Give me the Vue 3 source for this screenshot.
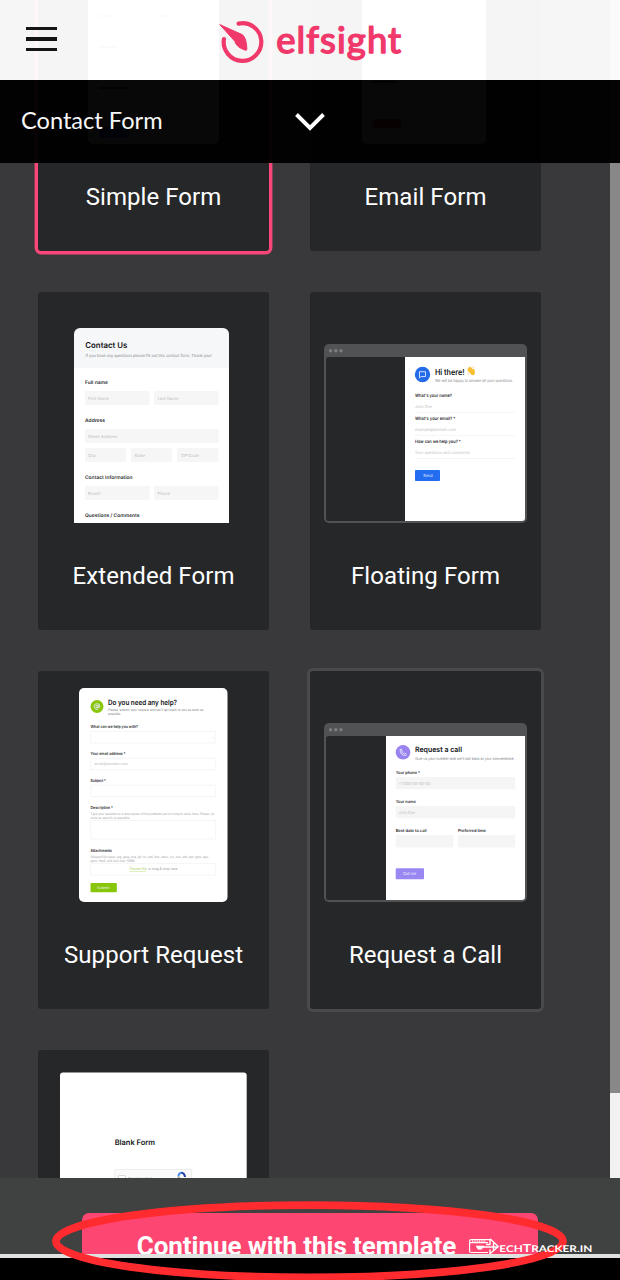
<script setup>
// Each preview is drawn in page coordinates: [x, baseline, width, size, kind, text]
const cards = [
  {
    name: 'Simple Form', x: 38, y: -87, state: 'selected', labelWidth: 135.5,
    rects: [[88, -50, 131, 194, 5, '#fff'], [99, 15, 12, 2, 0, '#999'], [156, 15, 12, 2, 0, '#999'], [99, 46, 18, 2, 0, '#999'], [99, 87, 27, 2, 0, '#444'], [99, 95, 103, 13, 0, '#f3f3f3'], [99, 127, 30, 11, 1, '#226bea']],
    texts: [],
  },
  {
    name: 'Email Form', x: 310, y: -87, state: '', labelWidth: 122,
    rects: [[362, -50, 124, 194, 5, '#fff'], [373, 81, 22, 2, 0, '#555'], [373, 119, 28, 9, 1, '#e03422']],
    texts: [],
  },
  {
    name: 'Extended Form', x: 38, y: 292, state: '', labelWidth: 162,
    rects: [
      [74, 328, 155, 50, 6, '#f6f7f8'], [74, 368, 155, 155, 0, '#fff'],
      [85, 391, 64.5, 14, 1, '#f6f6f7'], [154, 391, 64.5, 14, 1, '#f6f6f7'],
      [85, 429, 133.5, 14, 1, '#f6f6f7'],
      [85, 448, 41, 14, 1, '#f6f6f7'], [131, 448, 41, 14, 1, '#f6f6f7'], [177, 448, 41.5, 14, 1, '#f6f6f7'],
      [85, 486, 64.5, 14, 1, '#f6f6f7'], [154, 486, 64.5, 14, 1, '#f6f6f7'],
    ],
    texts: [
      [85.3, 348, 42, 8, 'title', 'Contact Us'],
      [85.5, 356.8, 126, 4.2, 'sub', 'If you have any questions please fill out this contact form. Thank you!'],
      [85, 384, 23, 4.8, 'label', 'Full name'], [88, 399.7, 21, 4, 'hint', 'First Name'], [157.5, 399.7, 21, 4, 'hint', 'Last Name'],
      [85, 422, 20, 4.8, 'label', 'Address'], [88, 437.7, 29.5, 4, 'hint', 'Street Address'],
      [88, 457, 8, 4, 'hint', 'City'], [134.5, 457, 10.5, 4, 'hint', 'State'], [181, 457, 18, 4, 'hint', 'ZIP Code'],
      [85, 479, 47.5, 4.8, 'label', 'Contact Information'], [88, 494.7, 13, 4, 'hint', 'Email*'], [157.5, 494.7, 12.5, 4, 'hint', 'Phone'],
      [85, 517, 54.5, 4.8, 'label', 'Questions / Comments'],
    ],
  },
  {
    name: 'Floating Form', x: 310, y: 292, state: '', labelWidth: 149, window: { y: 344, split: 405 },
    rects: [[415, 412, 100, 0.8, 0, '#f3f3f3'], [415, 435, 100, 0.8, 0, '#f3f3f3'], [415, 458, 100, 0.8, 0, '#f3f3f3'], [415, 470, 25, 11, 0.8, '#226df0']],
    badge: { x: 422.5, y: 374.5, r: 7.7, color: '#236be8', icon: 'chat' },
    texts: [
      [435, 375, 29.5, 8.4, 'title', 'Hi there!'],
      [435, 382.3, 78, 4, 'sub', 'We will be happy to answer all your questions.'],
      [415, 397, 37, 4.4, 'label', "What's your name?"], [415, 408, 17, 4, 'hint', 'John Doe'],
      [415, 420, 40.5, 4.4, 'label', "What's your email? *"], [415, 431, 41, 4, 'hint', 'example@domain.com'],
      [415, 443, 46, 4.4, 'label', 'How can we help you? *'], [415, 453.6, 55, 4, 'hint', 'Your questions and comments'],
      [423.2, 477.2, 9.3, 4, 'button', 'Send'],
    ],
  },
  {
    name: 'Support Request', x: 38, y: 671, state: '', labelWidth: 179,
    rects: [
      [79, 688, 148.5, 214, 5, '#fff'],
      [90.7, 731.5, 125, 11.5, 0.5, 'box'], [90.7, 758.3, 125, 11.5, 0.5, 'box'], [90.7, 785.2, 125, 11.5, 0.5, 'box'],
      [90.7, 820.5, 125, 18.5, 0.5, 'box'], [90.7, 863.6, 125, 11.5, 0.5, 'box'], [90.5, 883, 26.3, 9.3, 0.8, '#87c609'],
    ],
    badge: { x: 97, y: 706.5, r: 6.5, color: '#8bc60c', icon: 'at' },
    texts: [
      [108, 705, 69, 7.3, 'title', 'Do you need any help?'],
      [108, 711.3, 95.5, 3.5, 'sub', "Please, submit your request and we'll get back to you as soon as"], [108, 715.3, 13, 3.5, 'sub', 'possible.'],
      [90.5, 728.3, 47.5, 4, 'label', 'What can we help you with?'], [95, 738.3, 2, 3, 'hint', '-'], [212, 738, 2, 3, 'hint', '⌄'],
      [90.5, 755.3, 35, 4, 'label', 'Your email address *'], [94.5, 765.3, 33.5, 3.6, 'hint', 'email@domain.com'],
      [90.5, 782, 15.5, 4, 'label', 'Subject *'],
      [90.5, 809, 22.5, 4, 'label', 'Description *'],
      [90.5, 815.3, 124, 3.4, 'fine', 'Type your question or a description of the problem you’re trying to solve here. Please, try'], [90.5, 819.4, 39.5, 3.4, 'fine', 'to be as specific as possible.'],
      [90.5, 851.7, 21.5, 4, 'label', 'Attachments'],
      [90.5, 858.2, 118.5, 3.4, 'fine', 'Allowed file types: jpg, jpeg, png, gif, txt, pdf, doc, docx, xls, xlsx, odt, ppt, pptx, pps,'], [90.5, 862.3, 44.5, 3.4, 'fine', 'ppsx, mp3, and less than 10MB.'],
      [129.5, 870.3, 16.7, 3.6, 'link', 'Choose file'], [148, 870.3, 29.5, 3.6, 'fine', 'or drag & drop here'],
      [97, 888.9, 12.5, 3.8, 'button', 'Submit'],
    ],
  },
  {
    name: 'Request a Call', x: 310, y: 671, state: 'hovered', labelWidth: 153, window: { y: 723, split: 386 },
    rects: [
      [395.7, 777, 119.5, 12.3, 0.8, '#f5f5f6'], [395.7, 806, 119.5, 12.3, 0.8, '#f5f5f6'],
      [395.7, 835, 57.5, 12.5, 0.8, '#f5f5f6'], [458, 835, 57.2, 12.5, 0.8, '#f5f5f6'], [395.7, 868.3, 28.3, 11, 0.8, '#9b87f1'],
    ],
    badge: { x: 403, y: 752.3, r: 7.3, color: '#9a83ee', icon: 'phone' },
    texts: [
      [415, 752.3, 47, 7.4, 'title', 'Request a call'],
      [415, 759.8, 99.5, 3.9, 'sub', "Give us your number and we'll call back at your convenience."],
      [395.7, 774, 24.3, 4.2, 'label', 'Your phone *'], [398.5, 784.8, 31.5, 4, 'hint', '+1 000-00-00-00'],
      [395.7, 803, 20, 4.2, 'label', 'Your name'], [398.5, 813.8, 16.5, 4, 'hint', 'John Doe'],
      [395.7, 832, 31, 4.2, 'label', 'Best date to call'], [458, 832, 28, 4.2, 'label', 'Preferred time'],
      [403, 875.3, 13.3, 4, 'button', 'Call me'],
    ],
  },
  {
    name: '', x: 38, y: 1050, state: '', labelWidth: 0,
    rects: [[60, 1072.5, 186.7, 140, 3, '#fff'], [114.7, 1169.5, 77, 20, 1, 'panel'], [118.5, 1175.5, 7, 7, 0.5, 'check']],
    captcha: true,
    texts: [[114.7, 1144.7, 40.3, 7.6, 'title', 'Blank Form'], [128, 1180, 24, 4, 'sub', "I'm not a robot"]],
  },
]

const outlined = { box: ['#fff', '#f0f0f0'], panel: ['#fafafa', '#e6e6e6'], check: ['#fff', '#c9c9c9'] }
const fillOf = (c) => (outlined[c] ? outlined[c][0] : c)
const strokeOf = (c) => (outlined[c] ? outlined[c][1] : 'none')
</script>

<template>
  <div class="page">
    <main class="gallery">
      <div class="grid">
        <article v-for="card in cards" :key="card.y + card.x" class="card" :class="card.state">
          <svg class="preview" width="231" height="258" :viewBox="`${card.x} ${card.y} 231 258`">
            <g v-if="card.window">
              <rect x="324" :y="card.window.y" width="203" height="179" rx="5" fill="#515254" />
              <rect x="326" :y="card.window.y + 13" :width="card.window.split - 320" height="164" rx="2.5" fill="#262729" />
              <rect :x="card.window.split + 20" :y="card.window.y + 13" :width="505 - card.window.split" height="164" rx="3" fill="#fff" />
              <rect :x="card.window.split" :y="card.window.y + 13" width="100" height="164" fill="#fff" />
              <rect x="480" :y="card.window.y + 13" width="45" height="20" fill="#fff" />
              <circle v-for="d in 3" :key="d" :cx="325.4 + d * 5.2" :cy="card.window.y + 6.8" r="1.7" fill="#7d7e80" />
            </g>
            <rect v-for="(r, i) in card.rects" :key="i" :x="r[0]" :y="r[1]" :width="r[2]" :height="r[3]" :rx="r[4]" :fill="fillOf(r[5])" :stroke="strokeOf(r[5])" stroke-width="0.7" />
            <g v-if="card.badge" :transform="`translate(${card.badge.x} ${card.badge.y})`">
              <circle :r="card.badge.r" :fill="card.badge.color" />
              <path v-if="card.badge.icon === 'chat'" d="M-3-2.8H3V2H-1.2L-3 3.4Z" class="glyph" />
              <g v-else-if="card.badge.icon === 'at'" class="glyph">
                <circle r="1.2" />
                <path d="M1.2-1.2V.7Q2.8 1.6 2.8-.2A2.8 2.8 0 1 0 1.3 2.5" />
              </g>
              <path v-else d="M-3-2.6L-1.7-3.3L-.6-1.2L-1.3-.4Q-.6 1 .7 1.5L1.5.7L3.4 1.9L2.6 3.2Q-2.6 3.2-3-2.6Z" class="glyph" />
            </g>
            <g v-if="card.badge && card.badge.icon === 'chat'" fill="#f9bd32">
              <path d="M467.4 370.6L472 375.3Q475.8 375.2 474.8 371L473.9 368.6L472.9 369.2L470.2 366.5L469.4 367.2L468.6 367L468.4 367.9L467.5 368.1L468 369.3Z" />
              <path d="M467 372.5L469 375M472.5 366.8L474.4 368" fill="none" stroke="#efb64c" stroke-width=".6" />
            </g>
            <g v-if="card.captcha" fill="none" stroke-width="2">
              <path d="M178.5 1176A3.6 3.6 0 0 1 182 1172.8" stroke="#4b8cf0" />
              <path d="M181.5 1172.8Q184.5 1173 185 1177" stroke="#253ea4" />
              <path d="M178.5 1176A3.5 3.5 0 0 0 184 1179" stroke="#aaa" />
            </g>
            <text v-for="(t, i) in card.texts" :key="'t' + i" :x="t[0]" :y="t[1]" :textLength="t[2]" :font-size="t[3]" :class="t[4]" lengthAdjust="spacingAndGlyphs">{{ t[5] }}</text>
          </svg>
          <svg v-if="card.name" class="name" width="231" height="52" viewBox="0 0 231 52">
            <text x="115.5" y="34.4" text-anchor="middle" :textLength="card.labelWidth">{{ card.name }}</text>
          </svg>
        </article>
      </div>
      <div class="scrollbar"><div class="thumb"></div></div>
    </main>

    <div class="top">
      <header class="header">
        <div class="burger"><i></i><i></i><i></i></div>
        <svg class="logo" width="190" height="70" viewBox="218 8 190 70">
          <path d="M238.6 23.6A18.8 18.8 0 1 1 223.9 39.2" fill="none" stroke="#f0386b" stroke-width="4.2" stroke-linecap="round" />
          <path d="M219.8 24.6L242.5 34.8Q246.7 38.5 246.9 49.5Q246.5 50.6 244.8 50Q236.3 47.2 234.8 41.2Z" fill="#f0386b" stroke="#f0386b" stroke-linejoin="round" />
          <text x="276.2" y="53.4" textLength="125">elfsight</text>
        </svg>
      </header>
      <div class="select">
        <span>Contact Form</span>
        <svg width="34" height="22" viewBox="0 0 34 22"><path d="M3.5 3.5L17 17L30.5 3.5" fill="none" stroke="#fff" stroke-width="3.9" /></svg>
      </div>
    </div>

    <footer class="bottom">
      <div class="action"><button class="continue">Continue with this template</button></div>
      <div class="edge"></div>
      <div class="navigation"></div>
    </footer>

    <svg class="marks" width="620" height="90" viewBox="0 1190 620 90">
      <ellipse cx="309.5" cy="1241.3" rx="253.5" ry="36.2" fill="none" stroke="#ff2b2f" stroke-width="7.8" />
      <g fill="none" stroke="#fff" stroke-width="1.2">
        <path d="M490 1239.6H471.2Q469.6 1239.6 469.6 1241.2V1251Q469.6 1252.5 471.2 1252.5H488M470 1242.6H488" />
        <path d="M472 1241.1H486" stroke-dasharray="1.3 1" />
        <path d="M476 1246H484L481.5 1249.2H478Z" fill="#fff" stroke-width=".6" />
        <path d="M482 1247H498M490 1238.8L498.3 1246.5L490 1253.8M490 1239V1244.5H486M490 1249.5V1254M493.5 1243V1251" stroke-width="1.4" />
      </g>
      <text x="499.3" y="1251.7" textLength="93" lengthAdjust="spacingAndGlyphs" class="watermark">ECH<tspan class="big">T</tspan>RACKER.IN</text>
    </svg>
  </div>
</template>

<style>
body {
  margin: 0;
  background: #39393b;
}
</style>

<style scoped>
.page {
  position: relative;
  width: 620px;
  height: 1280px;
  overflow: hidden;
  background: #39393b;
  font-family: Roboto, "Liberation Sans", sans-serif;
}
.gallery {
  display: flex;
  justify-content: space-between;
  height: 1178px;
  overflow: hidden;
}
.grid {
  display: grid;
  grid-template-columns: 231px 231px;
  grid-auto-rows: 338px;
  gap: 41px;
  margin: -87px 0 0 38px;
}
.card {
  display: flex;
  flex-direction: column;
  border-radius: 3px;
  background: #262729;
}
.selected {
  box-shadow: 0 0 0 3.4px #f9477a;
}
.hovered {
  box-shadow: 0 0 0 3px #4a4a4c;
}
.preview,
.name {
  display: block;
}
.name text {
  font-size: 24px;
  fill: #fff;
}
.preview text {
  font-family: Inter, "Liberation Sans", sans-serif;
  text-rendering: geometricPrecision;
}
.title {
  font-weight: 600;
  fill: #101113;
}
.label {
  font-weight: 600;
  fill: #2b2c2e;
}
.sub {
  fill: #848587;
}
.hint {
  fill: #bcbdbf;
}
.fine {
  fill: #a3a4a6;
}
.link {
  fill: #a5cf52;
  text-decoration: underline;
}
.button {
  fill: #eef2ff;
}
.glyph {
  fill: none;
  stroke: #e5eaff;
  stroke-width: 0.9;
  stroke-linejoin: round;
}
.scrollbar {
  width: 10px;
  background: #f1f1f1;
}
.thumb {
  height: 1093px;
  background: #888;
}
.top {
  position: absolute;
  inset: 0 0 auto;
}
.header {
  display: flex;
  align-items: flex-start;
  height: 80px;
  background: rgba(255, 255, 255, 0.955);
}
.burger {
  display: flex;
  flex-direction: column;
  gap: 7px;
  width: 31px;
  margin: 26.5px 161px 0 26px;
}
.burger i {
  height: 3.5px;
  background: #151515;
}
.logo {
  margin-top: 8px;
}
.logo text {
  font-family: Lato, sans-serif;
  font-size: 36.5px;
  font-weight: 400;
  fill: #f0386b;
  stroke: #f0386b;
  stroke-width: 1.5;
  stroke-linejoin: round;
  text-rendering: geometricPrecision;
  font-variant-ligatures: none;
}
.select {
  display: flex;
  align-items: center;
  height: 83px;
  padding-left: 21px;
  background: rgba(0, 0, 0, 0.97);
  color: #f7f7f7;
  font-family: Lato, sans-serif;
  font-size: 23.6px;
}
.select span {
  width: 272px;
  padding-bottom: 3px;
}
.bottom {
  display: flex;
  flex-direction: column;
  height: 102px;
}
.action {
  height: 76px;
  padding: 35px 82px 0;
  box-sizing: border-box;
  overflow: hidden;
  background: #404141;
}
.continue {
  display: block;
  width: 456px;
  height: 66px;
  padding: 0 27px 0 0;
  border: 0;
  border-radius: 7px;
  background: #fd4672;
  color: #fff;
  font: 700 26px/66px Roboto, sans-serif;
  letter-spacing: -0.06px;
  white-space: nowrap;
}
.edge {
  height: 4px;
  background: #dfe1e1;
}
.navigation {
  flex: 1;
  background: #000;
}
.marks {
  position: absolute;
  left: 0;
  bottom: 0;
}
.watermark {
  font-family: Lato, sans-serif;
  font-size: 9.2px;
  font-weight: 700;
  fill: #fff;
  text-rendering: geometricPrecision;
}
.big {
  font-size: 11px;
}
</style>
